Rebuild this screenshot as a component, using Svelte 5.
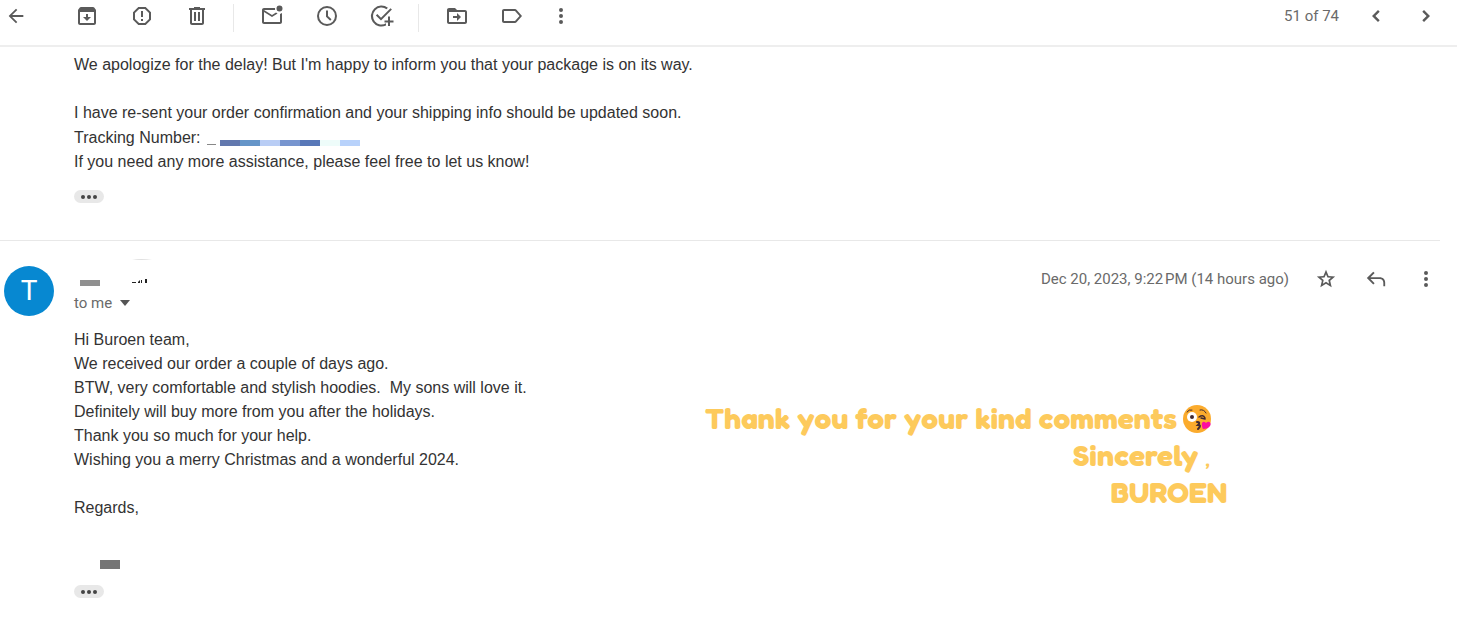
<script lang="ts">
	type Icon = { label: string; path: string };

	const archiveTools: Icon[] = [
		{
			label: 'Archive',
			path: 'M20.500 5.200 19.200 3.500C18.900 3.200 18.500 3 18 3H6c-.5 0-.9.2-1.200.5L3.500 5.200C3.200 5.600 3 6 3 6.500V19c0 1.100.9 2 2 2h14c1.100 0 2-.9 2-2V6.500c0-.5-.2-.9-.5-1.300zM19 19H5V8h14v11zM11 10h2v3h3l-4 4-4-4h3z'
		},
		{
			label: 'Report spam',
			path: 'M15.700 3H8.300L3 8.300v7.400L8.300 21h7.400l5.300-5.300V8.300L15.700 3zM19 14.900 14.900 19H9.100L5 14.900V9.100L9.100 5h5.800L19 9.100v5.800zM11 7h2v6h-2zM11 15h2v2h-2z'
		},
		{
			label: 'Delete',
			path: 'M15 4V3H9v1H4v2h1v13c0 1.100.9 2 2 2h10c1.100 0 2-.9 2-2V6h1V4h-5zm2 15H7V6h10v13zM9 8h2v9H9zM13 8h2v9h-2z'
		}
	];

	const statusTools: Icon[] = [
		{
			label: 'Mark as unread',
			path: 'M22 9v9c0 1.100-.9 2-2 2H4c-1.100 0-2-.9-2-2V6c0-1.100.9-2 2-2h11.100a5 5 0 0 0 0 2H4l8 5 4-2.500c.5.5 1 .8 1.600 1.100L12 13 4 8v10h16V9.900c.7-.1 1.400-.5 2-.9zM16.500 4.500a3 3 0 1 0 6 0 3 3 0 1 0-6 0z'
		},
		{
			label: 'Snooze',
			path: 'M12 2a10 10 0 1 0 0 20 10 10 0 0 0 0-20zm0 18a8 8 0 1 1 0-16 8 8 0 0 1 0 16zM13 6.500h-2v6.200l4.200 4 1.300-1.400-3.500-3.400z'
		},
		{
			label: 'Add to tasks',
			path: 'M20.500 4.200 11 13.700l-3.700-3.700-1.400 1.400 5.100 5.100L21.900 5.600zM16 19.300A8.500 8.500 0 1 1 16.500 5.200l1.400-1.400A10.500 10.500 0 1 0 16 21.500zM18 12.500h2v4h3.500v2H20v3.500h-2v-3.500h-3.500v-2H18z'
		}
	];

	const filingTools: Icon[] = [
		{
			label: 'Move to',
			path: 'M20 6h-8l-2-2H4c-1.100 0-2 .9-2 2v12c0 1.100.9 2 2 2h16c1.100 0 2-.9 2-2V8c0-1.100-.9-2-2-2zm0 12H4V8h16v10zM12 9l4 4-4 4v-3H8v-2h4z'
		},
		{
			label: 'Labels',
			path: 'M16.500 5.800C16.100 5.300 15.600 5 15 5H4c-1.100 0-2 .9-2 2v10c0 1.100.9 2 2 2h11c.6 0 1.100-.3 1.500-.8L22 12l-5.500-6.200zM15 17H4V7h11l4.500 5L15 17z'
		}
	];

	const morePath =
		'M12 8a2 2 0 1 0 0-4 2 2 0 0 0 0 4zm0 2a2 2 0 1 0 0 4 2 2 0 0 0 0-4zm0 6a2 2 0 1 0 0 4 2 2 0 0 0 0-4z';

	const trackingBlocks = ['#6278ae', '#6595c8', '#b9cdf5', '#7795cf', '#5878b8', '#eefcfa', '#b8d2fb'];
</script>

{#snippet tool(icon: Icon, size = 24)}
	<button class="tool" type="button" aria-label={icon.label}>
		<svg width={size} height={size} viewBox="0 0 24 24"><path fill-rule="evenodd" d={icon.path} /></svg>
	</button>
{/snippet}

{#snippet trimmed()}
	<button class="trimmed" type="button" aria-label="Show trimmed content">
		<i></i><i></i><i></i>
	</button>
{/snippet}

<div class="mail">
	<header class="toolbar">
		<div class="back">
			{@render tool({ label: 'Back', path: 'M20 11H7.800l5.600-5.600L12 4l-8 8 8 8 1.400-1.400L7.800 13H20z' }, 22)}
		</div>
		{#each archiveTools as icon}
			{@render tool(icon)}
		{/each}
		<span class="separator"></span>
		{#each statusTools as icon}
			{@render tool(icon)}
		{/each}
		<span class="separator"></span>
		{#each filingTools as icon}
			{@render tool(icon)}
		{/each}
		<div class="more">{@render tool({ label: 'More', path: morePath })}</div>

		<div class="pager">
			<span class="meta">51 of 74</span>
			{@render tool({ label: 'Newer', path: 'M15.700 7.700 14 6l-6 6 6 6 1.700-1.700L11.400 12z' })}
			{@render tool({ label: 'Older', path: 'M10 6 8.300 7.700l4.300 4.300-4.300 4.300L10 18l6-6z' })}
		</div>
	</header>

	<article class="message first">
		<p>We apologize for the delay! But I'm happy to inform you that your package is on its way.</p>
		<p class="gap">I have re-sent your order confirmation and your shipping info should be updated soon.</p>
		<p class="tracking">
			Tracking Number:
			<span class="redacted">
				<i class="lead"></i>
				{#each trackingBlocks as color}
					<i style="background: {color}"></i>
				{/each}
			</span>
		</p>
		<p>If you need any more assistance, please feel free to let us know!</p>
		{@render trimmed()}
	</article>

	<article class="reply">
		<header class="sender">
			<div class="avatar">T</div>
			<div class="who">
				<div class="name">
					<span class="block"></span>
					<svg class="specks" width="20" height="28" viewBox="0 0 20 28">
						<path d="M0 2q9-2 20 0z" fill="#e0e0e0" />
						<path d="M0 24h4v1H0zM6 24l2-2v3H6zM9 22h1v3H9zM13 21h2v4h-2z" fill="#222" />
					</svg>
				</div>
				<button class="recipient" type="button">
					to me
					<svg width="10" height="6" viewBox="0 0 10 6"><path d="M0 0h10L5 6z" /></svg>
				</button>
			</div>
			<div class="actions">
				<time class="meta" datetime="2023-12-20T21:22">Dec 20, 2023, 9:22&#8239;PM (14 hours ago)</time>
				{@render tool(
					{
						label: 'Star',
						path: 'M22 9.200l-7.200-.6L12 2 9.200 8.600 2 9.200l5.500 4.700L5.800 21l6.200-3.700 6.200 3.700-1.600-7.100L22 9.200zM12 15l-3.400 2.100.9-3.900-3-2.600 3.900-.3L12 6.700l1.600 3.600 3.900.3-3 2.600.9 3.900z'
					},
					22
				)}
				{@render tool(
					{
						label: 'Reply',
						path: 'M9 4 2 11l7 7 1.500-1.500L6 12h10c2.400 0 4 1.600 4 4v4h2v-4c0-3.600-2.400-6-6-6H6l4.500-4.500z'
					},
					22
				)}
				{@render tool({ label: 'More message options', path: morePath })}
			</div>
		</header>

		<div class="content">
			<div class="message">
				<p>Hi Buroen team,</p>
				<p>We received our order a couple of days ago.</p>
				<p>BTW, very comfortable and stylish hoodies.&nbsp; My sons will love it.</p>
				<p>Definitely will buy more from you after the holidays.</p>
				<p>Thank you so much for your help.</p>
				<p>Wishing you a merry Christmas and a wonderful 2024.</p>
				<p class="gap">Regards,</p>
				<div class="signature"></div>
				{@render trimmed()}
			</div>

			<aside class="note">
				<p class="inset">
					Thank you for your kind comments
					<svg width="28" height="28" viewBox="0 0 28 28" role="img" aria-label="Face blowing a kiss">
						<circle cx="14" cy="14" r="14" fill="#fbab2d" />
						<circle cx="9" cy="12" r="5" fill="#fff" />
						<circle cx="9" cy="12" r="2" fill="#402a32" />
						<g fill="none" stroke="#402a32" stroke-linecap="round">
							<path d="M4 7q2-3 5-2M17 5q4-1 6 3" stroke-width="1" />
							<path d="M16 12q4-3 6 1M18 13l4 1" stroke-width="1.500" />
							<path d="M14 17q4 0 1 3 4 0 0 4" stroke-width="2" />
						</g>
						<path d="M20 24c-3-6 0-9 3-6 3-3 6 0 4 3-1 2-4 3-7 3z" fill="#fc0da0" />
					</svg>
				</p>
				<p class="inset">Sincerely<span class="comma">,</span></p>
				<p>BUROEN</p>
			</aside>
		</div>
	</article>
</div>

<style>
	:global(body) {
		margin: 0;
		background: #fff;
	}

	.mail {
		font-family: 'Liberation Sans', Arial, sans-serif;
		font-size: 16px;
		color: #333;
	}

	p {
		margin: 0;
	}

	button {
		padding: 0;
		border: 0;
		background: none;
		font: inherit;
		color: inherit;
		cursor: pointer;
	}

	.toolbar {
		display: flex;
		align-items: center;
		height: 31px;
		margin-right: 8px;
		padding: 0 6px 14px 0;
		border-bottom: 2px solid #eee;
	}

	.tool {
		display: flex;
		align-items: center;
		justify-content: center;
		flex: none;
		width: 55px;
		height: 30px;
	}

	.tool svg {
		fill: #5a5a5a;
	}

	.back {
		margin-right: 27px;
	}

	.back .tool,
	.back :global(.tool) {
		width: 32px;
	}

	.more :global(.tool) {
		width: 44px;
	}

	.separator {
		width: 1px;
		height: 28px;
		margin: 4px 10px 0 9px;
		background: #e8e8e8;
	}

	.pager,
	.actions {
		display: flex;
		align-items: center;
		margin-left: auto;
	}

	.pager :global(.tool),
	.actions :global(.tool) {
		width: 50px;
	}

	.meta {
		margin-right: 12px;
		font-family: Roboto, sans-serif;
		font-size: 15px;
		line-height: 18px;
		color: #6a6a6a;
		white-space: nowrap;
	}

	.message {
		line-height: 24px;
	}

	.message.first {
		padding: 6px 24px 37px 74px;
	}

	.gap {
		margin-top: 24px;
	}

	.tracking {
		display: flex;
		align-items: center;
		min-height: 25px;
	}

	.redacted {
		display: flex;
		margin: 10px 0 0 6px;
	}

	.redacted i {
		width: 20px;
		height: 6px;
	}

	.redacted .lead {
		width: 9px;
		height: 1px;
		margin: 4px 4px 0 0;
		background: #888;
	}

	.trimmed {
		display: flex;
		align-items: center;
		justify-content: center;
		gap: 2px;
		width: 30px;
		height: 13px;
		margin-top: 16px;
		border-radius: 7px;
		background: #e8e8e8;
	}

	.trimmed i {
		width: 4px;
		height: 4px;
		border-radius: 50%;
		background: #444;
	}

	.reply {
		margin-right: 14px;
	}

	.reply::before {
		content: '';
		display: block;
		height: 1px;
		margin-right: 11px;
		background: #e8e8e8;
	}

	.sender {
		display: flex;
		align-items: flex-start;
		padding: 17px 0 0 4px;
	}

	.avatar {
		width: 50px;
		height: 50px;
		margin-top: 8px;
		border-radius: 50%;
		background: #0788d1;
		font-family: Roboto, sans-serif;
		font-size: 28px;
		line-height: 50px;
		text-align: center;
		color: #fff;
	}

	.who {
		margin-left: 20px;
	}

	.name {
		display: flex;
		align-items: flex-end;
		height: 28px;
		padding-left: 6px;
	}

	.block {
		width: 20px;
		height: 6px;
		margin-right: 32px;
		background: #909090;
	}

	.recipient {
		display: flex;
		align-items: center;
		gap: 8px;
		height: 34px;
		font-family: Roboto, sans-serif;
		font-size: 15px;
		color: #6a6a6a;
	}

	.recipient svg {
		fill: #555;
	}

	.actions {
		margin-top: 6px;
	}

	.content {
		display: flex;
		align-items: flex-start;
		justify-content: space-between;
		padding: 8px 224px 0 74px;
	}

	.signature {
		width: 20px;
		height: 9px;
		margin: 40px 0 0 26px;
		background: #757575;
	}

	.note {
		display: flex;
		flex-direction: column;
		align-items: flex-end;
		margin-top: 72px;
		font-family: Fredoka, 'Fredoka One', Nunito, Lato, sans-serif;
		font-size: 30px;
		font-weight: 700;
		line-height: 37px;
		white-space: nowrap;
		color: #fdca5c;
	}

	.note .inset {
		display: flex;
		align-items: center;
		gap: 6px;
		margin-right: 16px;
	}

	.comma {
		font-weight: 400;
	}
</style>
